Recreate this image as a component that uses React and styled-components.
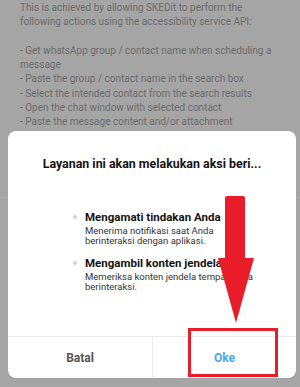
import React from 'react';
import styled, { createGlobalStyle } from 'styled-components';

const GlobalStyle = createGlobalStyle`
  html, body {
    margin: 0;
    padding: 0;
    background: #a5a5a5;
  }
  body {
    font-family: Roboto, "Noto Sans", "Liberation Sans", sans-serif;
  }
`;

const Screen = styled.div`
  position: relative;
  width: 300px;
  height: 387px;
  overflow: hidden;
  background: #a5a5a5;
`;

// page behind the dimmed overlay
const Backdrop = styled.div`
  height: 198px;
  box-sizing: border-box;
  padding: 1px 20px 0;
  border-bottom: 1px solid #ababab;
  color: #6c6c6c;
  font-size: 10px;
  line-height: 14.3px;
`;

const Line = styled.div`
  white-space: nowrap;
  min-height: 14.3px;
`;

const Dialog = styled.div`
  position: absolute;
  left: 8px;
  top: 131px;
  width: 288px;
  height: 247px;
  background: #fff;
  border-radius: 8px;
  display: flex;
  flex-direction: column;
  overflow: hidden;
`;

const Title = styled.div`
  padding-top: 25px;
  text-align: center;
  font-weight: 700;
  font-size: 12.4px;
  line-height: 16px;
  color: #141414;
`;

const List = styled.ul`
  list-style: none;
  margin: 38px 0 0;
  padding: 0 20px 0 65px;
  display: flex;
  flex-direction: column;
  gap: 10px;
  flex: 1;
`;

const Item = styled.li`
  position: relative;
  padding-left: 12px;
`;

const Dot = styled.span`
  position: absolute;
  left: 0;
  top: 5px;
  width: 4px;
  height: 4px;
  border-radius: 50%;
  background: #d2d2d2;
`;

const ItemTitle = styled.div`
  font-weight: 700;
  font-size: 11.5px;
  line-height: 14px;
  color: #141414;
  white-space: nowrap;
`;

const ItemDesc = styled.div`
  margin-top: 2px;
  font-size: 9.5px;
  line-height: 10px;
  color: #333;
  white-space: nowrap;
`;

const Footer = styled.div`
  display: grid;
  grid-template-columns: 1fr 1fr;
  height: 41px;
  border-top: 1px solid #ececec;
`;

const Action = styled.button`
  border: none;
  background: none;
  padding: 0;
  font-family: inherit;
  font-weight: 700;
  font-size: 12px;
  color: ${p => (p.$primary ? '#45a6f2' : '#565656')};
  border-left: ${p => (p.$primary ? '1px solid #ececec' : 'none')};
`;

const Highlight = styled.div`
  position: absolute;
  left: 188px;
  top: 328px;
  width: 90px;
  height: 49px;
  box-sizing: border-box;
  border: 3px solid #e91d2a;
`;

const Arrow = styled.svg`
  position: absolute;
  left: 0;
  top: 0;
  pointer-events: none;
`;

const intro = [
  'This is achieved by allowing SKEDit to perform the',
  'following actions using the accessibility service API:',
  '',
  '- Get whatsApp group / contact name when scheduling a',
  'message',
  '- Paste the group / contact name in the search box',
  '- Select the intended contact from the search results',
  '- Open the chat window with selected contact',
  '- Paste the message content and/or attachment',
];

const items = [
  {
    title: 'Mengamati tindakan Anda',
    desc: ['Menerima notifikasi saat Anda', 'berinteraksi dengan aplikasi.'],
  },
  {
    title: 'Mengambil konten jendela',
    desc: ['Memeriksa konten jendela tempat Anda', 'berinteraksi.'],
  },
];

export default function App() {
  return (
    <Screen>
      <GlobalStyle />
      <Backdrop>
        {intro.map((t, i) => (
          <Line key={i}>{t}</Line>
        ))}
      </Backdrop>

      <Dialog>
        <Title>Layanan ini akan melakukan aksi beri...</Title>
        <List>
          {items.map(it => (
            <Item key={it.title}>
              <Dot />
              <ItemTitle>{it.title}</ItemTitle>
              <ItemDesc>
                {it.desc.map(d => (
                  <div key={d}>{d}</div>
                ))}
              </ItemDesc>
            </Item>
          ))}
        </List>
        <Footer>
          <Action>Batal</Action>
          <Action $primary>Oke</Action>
        </Footer>
      </Dialog>

      <Highlight />
      <Arrow width="300" height="387" viewBox="0 0 300 387">
        <path
          d="M227 196 H243 Q245 196 245 198 V258 H254 L236 323 L218 258 H225 V198 Q225 196 227 196 Z"
          fill="#e91d2a"
        />
      </Arrow>
    </Screen>
  );
}
